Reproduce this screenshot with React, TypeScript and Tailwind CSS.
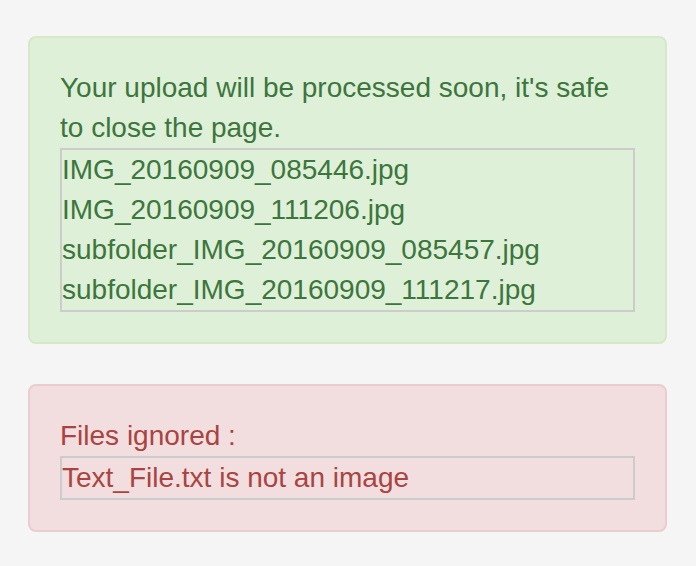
const files = [
  "IMG_20160909_085446.jpg",
  "IMG_20160909_111206.jpg",
  "subfolder_IMG_20160909_085457.jpg",
  "subfolder_IMG_20160909_111217.jpg",
];

const ignored = ["Text_File.txt is not an image"];

const FileList = ({ items }: { items: string[] }) => (
  <div className="border-2 border-[#cccccc]">
    {items.map((f) => (
      <div key={f}>{f}</div>
    ))}
  </div>
);

export default function App() {
  return (
    <div
      className="min-h-screen bg-[#f5f5f5] pl-[28px] pr-[29px] pt-[36px] text-[28px] leading-[40px]"
      style={{ fontFamily: '"Liberation Sans", Arial, sans-serif' }}
    >
      <div className="mb-[40px] rounded-[8px] border-2 border-[#d6e9c6] bg-[#dff0d8] p-[30px] text-[#3c763d]">
        <p>Your upload will be processed soon, it's safe to close the page.</p>
        <FileList items={files} />
      </div>
      <div className="rounded-[8px] border-2 border-[#ebccd1] bg-[#f2dede] p-[30px] text-[#a94442]">
        <p>Files ignored :</p>
        <FileList items={ignored} />
      </div>
    </div>
  );
}
